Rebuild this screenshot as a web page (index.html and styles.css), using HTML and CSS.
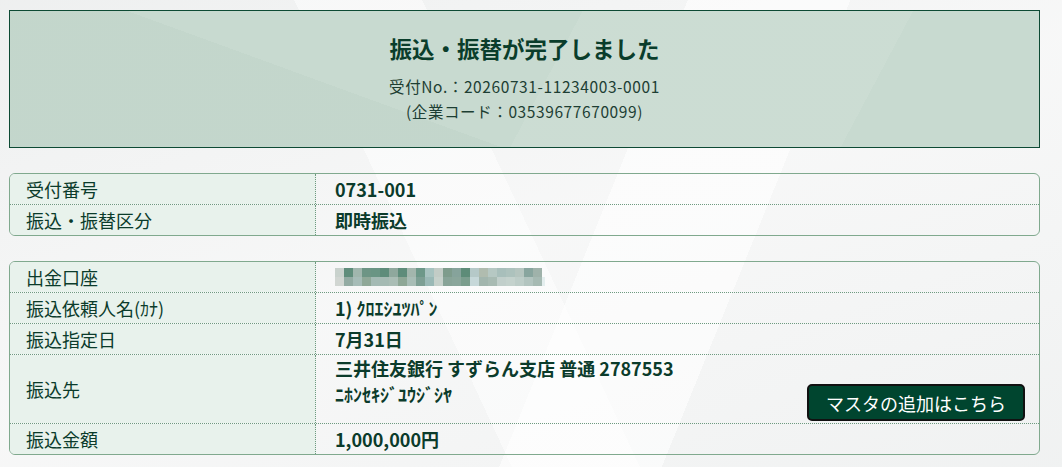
FILE: index.html
```html
<!DOCTYPE html>
<html lang="ja">
<head>
<meta charset="utf-8">
<title>振込・振替完了</title>
<link rel="stylesheet" href="styles.css">
</head>
<body>
<div class="page">
  <section class="done">
    <h1 class="done-title">振込・振替が完了しました</h1>
    <p class="done-line">受付No.：20260731-11234003-0001</p>
    <p class="done-line">(企業コード：03539677670099)</p>
  </section>

  <div class="info">
    <div class="row">
      <div class="label">受付番号</div>
      <div class="value">0731-001</div>
    </div>
    <div class="row">
      <div class="label">振込・振替区分</div>
      <div class="value">即時振込</div>
    </div>
  </div>

  <div class="info">
    <div class="row">
      <div class="label">出金口座</div>
      <div class="value">
        <svg class="mosaic" width="210" height="18" viewBox="0 0 210 18" aria-hidden="true">
          <rect x="0" y="0" width="9" height="9" fill="#c9d2cd"/>
          <rect x="9" y="0" width="9" height="9" fill="#5f8d7b"/>
          <rect x="18" y="0" width="9" height="9" fill="#a0b6ad"/>
          <rect x="27" y="0" width="9" height="9" fill="#6d9585"/>
          <rect x="36" y="0" width="9" height="9" fill="#6a9584"/>
          <rect x="45" y="0" width="9" height="9" fill="#5e8c7a"/>
          <rect x="54" y="0" width="9" height="9" fill="#8fa89d"/>
          <rect x="63" y="0" width="9" height="9" fill="#5e8c7a"/>
          <rect x="72" y="0" width="9" height="9" fill="#a3b6ad"/>
          <rect x="81" y="0" width="9" height="9" fill="#6d9889"/>
          <rect x="90" y="0" width="9" height="9" fill="#a7c3c0"/>
          <rect x="99" y="0" width="9" height="9" fill="#c2ccc6"/>
          <rect x="108" y="0" width="9" height="9" fill="#7e9c8c"/>
          <rect x="117" y="0" width="9" height="9" fill="#86a39b"/>
          <rect x="126" y="0" width="9" height="9" fill="#5d8c78"/>
          <rect x="135" y="0" width="9" height="9" fill="#b5c9c8"/>
          <rect x="144" y="0" width="9" height="9" fill="#b0bcaf"/>
          <rect x="153" y="0" width="9" height="9" fill="#b6c8c3"/>
          <rect x="162" y="0" width="9" height="9" fill="#a8bfbb"/>
          <rect x="171" y="0" width="9" height="9" fill="#adc2bd"/>
          <rect x="180" y="0" width="9" height="9" fill="#b5c5bf"/>
          <rect x="189" y="0" width="9" height="9" fill="#88a59e"/>
          <rect x="198" y="0" width="9" height="9" fill="#9fb2aa"/>
          <rect x="0" y="9" width="9" height="9" fill="#d1d6d2"/>
          <rect x="9" y="9" width="9" height="9" fill="#93aba3"/>
          <rect x="18" y="9" width="9" height="9" fill="#a6bcb7"/>
          <rect x="27" y="9" width="9" height="9" fill="#8fa898"/>
          <rect x="36" y="9" width="9" height="9" fill="#a4bab4"/>
          <rect x="45" y="9" width="9" height="9" fill="#a5bab3"/>
          <rect x="54" y="9" width="9" height="9" fill="#aabdb5"/>
          <rect x="63" y="9" width="9" height="9" fill="#8ea796"/>
          <rect x="72" y="9" width="9" height="9" fill="#a8bdb6"/>
          <rect x="81" y="9" width="9" height="9" fill="#7d9f94"/>
          <rect x="90" y="9" width="9" height="9" fill="#9ab9b6"/>
          <rect x="99" y="9" width="9" height="9" fill="#c6d1cb"/>
          <rect x="108" y="9" width="9" height="9" fill="#88a498"/>
          <rect x="117" y="9" width="9" height="9" fill="#8aa69b"/>
          <rect x="126" y="9" width="9" height="9" fill="#7b9e8e"/>
          <rect x="135" y="9" width="9" height="9" fill="#c6d8d9"/>
          <rect x="144" y="9" width="9" height="9" fill="#a2b6ae"/>
          <rect x="153" y="9" width="9" height="9" fill="#a8bbb3"/>
          <rect x="162" y="9" width="9" height="9" fill="#c1cfcb"/>
          <rect x="171" y="9" width="9" height="9" fill="#c4d2cd"/>
          <rect x="180" y="9" width="9" height="9" fill="#bdcdc8"/>
          <rect x="189" y="9" width="9" height="9" fill="#b2c4bf"/>
          <rect x="198" y="9" width="9" height="9" fill="#a6bab3"/>
          <rect x="207" y="9" width="3" height="9" fill="#e4eeee"/>
        </svg>
      </div>
    </div>
    <div class="row">
      <div class="label">振込依頼人名(ｶﾅ)</div>
      <div class="value">1) ｸﾛｴｼﾕﾂﾊﾟﾝ</div>
    </div>
    <div class="row">
      <div class="label">振込指定日</div>
      <div class="value">7月31日</div>
    </div>
    <div class="row row-tall">
      <div class="label">振込先</div>
      <div class="value value-split">
        <div class="dest">
          <div>三井住友銀行 すずらん支店 普通 2787553</div>
          <div>ﾆﾎﾝｾｷｼﾞﾕｳｼﾞｼﾔ</div>
        </div>
        <button class="master-btn" type="button">マスタの追加はこちら</button>
      </div>
    </div>
    <div class="row">
      <div class="label">振込金額</div>
      <div class="value">1,000,000円</div>
    </div>
  </div>
</div>
</body>
</html>
```

FILE: styles.css
```css
html, body {
  margin: 0;
  padding: 0;
}

body {
  width: 1062px;
  height: 467px;
  overflow: hidden;
  font-family: "Noto Sans CJK JP", "Noto Sans", sans-serif;
  color: #0b3b2b;
  background-color: #f3f4f4;
  background-image:
    linear-gradient(112deg, rgba(255,255,255,0) 55%, rgba(255,255,255,0.6) 55%, rgba(255,255,255,0.6) 68%, rgba(255,255,255,0) 68%),
    linear-gradient(65deg, rgba(255,255,255,0) 40%, rgba(255,255,255,0.5) 40%, rgba(255,255,255,0.5) 50%, rgba(255,255,255,0) 50%),
    linear-gradient(160deg, rgba(235,237,237,0.6) 0%, rgba(250,250,250,0.6) 50%, rgba(238,240,240,0.6) 100%);
}

.page {
  padding: 10px 22px 0 9px;
}

.done {
  border: 1px solid #0d4a34;
  background-color: #c8dad0;
  background-image:
    linear-gradient(118deg, rgba(255,255,255,0) 52%, rgba(255,255,255,0.07) 52%, rgba(255,255,255,0.07) 82%, rgba(255,255,255,0) 82%),
    linear-gradient(20deg, rgba(0,60,30,0.025) 0%, rgba(0,60,30,0.025) 35%, rgba(255,255,255,0) 35%);
  text-align: center;
  padding: 21px 0 23px;
}

.done-title {
  margin: 0;
  font-size: 22.5px;
  line-height: 32px;
  font-weight: 700;
  color: #0a3d2b;
}

.done-line {
  margin: 0;
  font-size: 15.5px;
  letter-spacing: 0.6px;
  line-height: 25px;
  color: #1d3e33;
}

.done-title + .done-line {
  margin-top: 10px;
}

.info {
  margin-top: 25px;
  border: 1px solid #80a98e;
  border-radius: 6px;
  overflow: hidden;
}

.row {
  display: grid;
  grid-template-columns: 306px 1fr;
  border-bottom: 1px dotted #6e9a80;
}

.row:last-child {
  border-bottom: none;
}

.label {
  background: #e8f2ec;
  border-right: 1px dotted #6e9a80;
  padding: 0 16px;
  font-size: 18px;
  line-height: 30px;
  display: flex;
  align-items: center;
}

.value {
  padding: 0 19px;
  font-size: 18px;
  line-height: 30px;
  font-weight: 700;
  display: flex;
  align-items: center;
}

.mosaic {
  display: block;
}

.row-tall .label,
.row-tall .value {
  min-height: 66px;
}

.value-split {
  justify-content: space-between;
  align-items: flex-end;
  padding-right: 14px;
  padding-bottom: 2px;
}

.dest {
  align-self: flex-start;
  padding-top: 0;
  line-height: 26px;
}

.master-btn {
  font-family: inherit;
  width: 218px;
  height: 37px;
  padding: 0;
  border: 2px solid #111;
  border-radius: 5px;
  background: #00452f;
  color: #fff;
  font-size: 18px;
  font-weight: 400;
  cursor: pointer;
}
```
